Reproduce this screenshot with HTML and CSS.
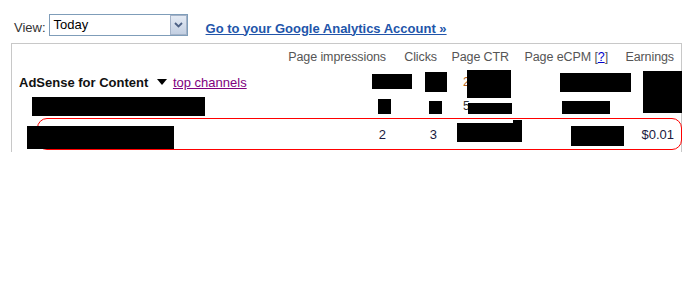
FILE: index.html
```html
<!DOCTYPE html>
<html>
<head>
<meta charset="utf-8">
<link rel="stylesheet" href="styles.css">
</head>
<body>
<div class="viewbar">
  <span class="view-label">View:</span>
  <div class="select">
    <span class="select-text">Today</span>
    <span class="select-btn"><svg width="9" height="6" viewBox="0 0 9 6"><path d="M1 1 L4.5 4.5 L8 1" fill="none" stroke="#4d6185" stroke-width="1.8"/></svg></span>
  </div>
  <a class="ga-link" href="#">Go to your Google Analytics Account »</a>
</div>
<div class="box">
  <table class="report">
    <colgroup>
      <col class="c-label"><col class="c-pi"><col class="c-clicks"><col class="c-ctr"><col class="c-ecpm"><col class="c-earn">
    </colgroup>
    <tr class="head">
      <td></td>
      <td>Page impressions</td>
      <td>Clicks</td>
      <td>Page CTR</td>
      <td>Page eCPM [<a href="#" class="help">?</a>]</td>
      <td>Earnings</td>
    </tr>
    <tr class="r1">
      <td class="label"><b>AdSense for Content</b> <span class="tri"></span><a href="#" class="chan">top channels</a></td>
      <td></td><td></td><td class="peek peek1">2</td><td></td><td></td>
    </tr>
    <tr class="r2">
      <td></td><td></td><td></td><td class="peek peek2">5</td><td></td><td></td>
    </tr>
    <tr class="r3">
      <td></td><td>2</td><td>3</td><td></td><td></td><td>$0.01</td>
    </tr>
  </table>
  <div class="ring"></div>
  <div class="rd" style="left:360px;top:30px;width:40px;height:15px"></div>
  <div class="rd" style="left:413px;top:28px;width:22px;height:20px"></div>
  <div class="rd" style="left:455px;top:26px;width:44px;height:28px"></div>
  <div class="rd" style="left:548px;top:29px;width:71px;height:19px"></div>
  <div class="rd" style="left:631px;top:27px;width:39px;height:42px"></div>
  <div class="rd" style="left:20px;top:53px;width:173px;height:19px"></div>
  <div class="rd" style="left:366px;top:55px;width:13px;height:15px"></div>
  <div class="rd" style="left:417px;top:57px;width:13px;height:13px"></div>
  <div class="rd" style="left:456px;top:59px;width:44px;height:11px"></div>
  <div class="rd" style="left:550px;top:57px;width:48px;height:13px"></div>
  <div class="rd" style="left:15px;top:82px;width:147px;height:23px"></div>
  <div class="rd" style="left:445px;top:79px;width:65px;height:19px"></div>
  <div class="rd" style="left:501px;top:76px;width:9px;height:4px"></div>
  <div class="rd" style="left:559px;top:82px;width:53px;height:20px"></div>
</div>
</body>
</html>
```

FILE: styles.css
```css
html, body {
  margin: 0;
  padding: 0;
  background: #fff;
}
body {
  font-family: "Liberation Sans", Arial, sans-serif;
  font-size: 13px;
  color: #222;
}
.viewbar {
  display: flex;
  align-items: center;
  height: 22px;
  padding: 14px 0 0 14px;
}
.view-label {
  color: #333;
  margin-right: 3px;
  position: relative;
  top: 2px;
}
.select {
  box-sizing: border-box;
  width: 139px;
  height: 22px;
  border: 1px solid #7f9db9;
  display: flex;
  align-items: center;
  justify-content: space-between;
  background: #fff;
}
.select-text {
  padding-left: 4px;
  color: #000;
  position: relative;
  top: -1px;
}
.select-btn {
  box-sizing: border-box;
  width: 17px;
  height: 20px;
  border: 1px solid #a5b3c8;
  background: linear-gradient(#e4eaf4, #c3cfe2);
  display: flex;
  align-items: center;
  justify-content: center;
}
.ga-link {
  margin-left: 18px;
  color: #2255aa;
  font-weight: bold;
  text-decoration: underline;
  position: relative;
  top: 3px;
}
.box {
  position: relative;
  margin: 7px 0 0 11px;
  width: 669px;
  height: 108px;
  border: 1px solid #c8c8c8;
  border-bottom: none;
}
.report {
  border-collapse: collapse;
  table-layout: fixed;
  width: 669px;
}
.report td {
  padding: 0 7px 0 0;
  text-align: right;
  white-space: nowrap;
}
.c-label { width: 268px; }
.c-pi { width: 113px; }
.c-clicks { width: 51px; }
.c-ctr { width: 72px; }
.c-ecpm { width: 99px; }
.c-earn { width: 66px; }
.head td {
  height: 26px;
  color: #555;
  font-size: 12.5px;
  letter-spacing: -0.1px;
}
.help {
  color: #0000cc;
}
.r1 td { height: 24px; }
.r2 td { height: 24px; }
.r3 td {
  height: 31px;
  color: #1a1a40;
  padding-top: 1px;
}
.report td.label {
  text-align: left;
  padding-left: 7px;
  color: #111;
}
.tri {
  display: inline-block;
  width: 0;
  height: 0;
  border-left: 5px solid transparent;
  border-right: 5px solid transparent;
  border-top: 6px solid #000;
  margin: 0 6px 2px 5px;
  vertical-align: middle;
}
.chan {
  color: #800080;
}
.report td.peek {
  text-align: left;
  font-size: 12px;
}
.report td.peek1 {
  padding-left: 19px;
  color: #b06020;
  vertical-align: middle;
}
.report td.peek2 {
  padding-left: 19px;
  color: #333;
}
.ring {
  position: absolute;
  left: 25px;
  top: 74px;
  width: 643px;
  height: 30px;
  border: 1px solid #ff0000;
  border-radius: 10px;
}
.rd {
  position: absolute;
  background: #000;
}
```
